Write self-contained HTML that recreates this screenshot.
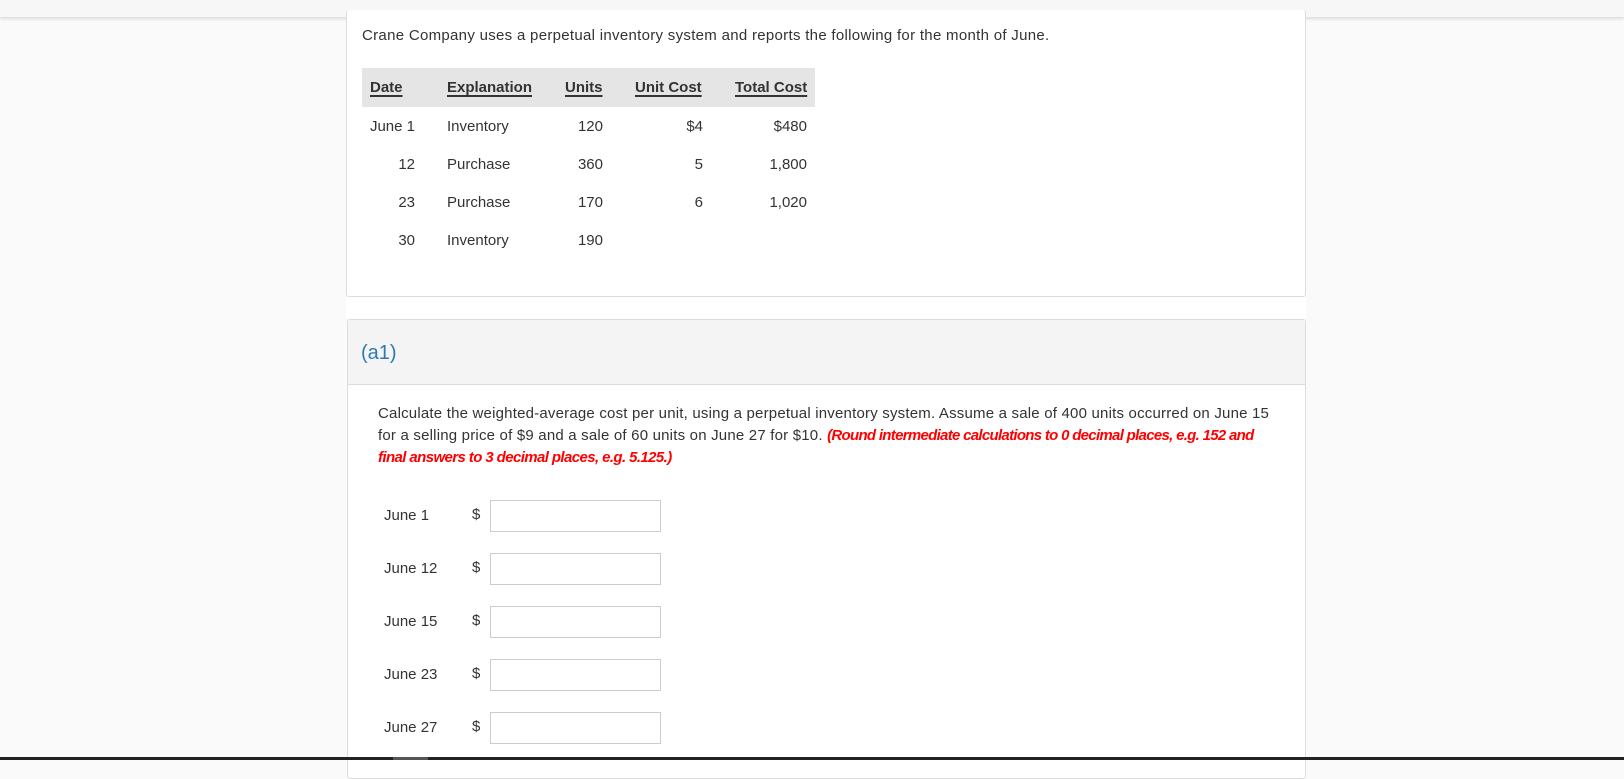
<!DOCTYPE html>
<html><head><meta charset="utf-8"><style>
*{margin:0;padding:0;box-sizing:border-box}
body{width:1624px;height:760px;overflow:hidden;background:#fafafa;font-family:"Liberation Sans",sans-serif;color:#333;position:relative}
.top{position:absolute;left:0;top:0;width:1624px;height:17px;background:#f7f7f7;box-shadow:0 2px 3px rgba(0,0,0,.12)}
.card{position:absolute;background:#fff;border:1px solid #ddd;border-radius:3px}
.t{position:absolute;white-space:nowrap;font-size:15px;line-height:20px}
.hd{position:absolute;left:362px;top:68px;width:453px;height:39px;background:#e5e5e5}
.u{text-decoration:underline;text-underline-offset:3px;text-decoration-thickness:2px}
.inp{position:absolute;left:490px;width:171px;height:32px;border:1px solid #ccc;background:#fff}
.red{color:#f00;font-weight:bold;font-style:italic}
</style></head><body>
<div class="top"></div>
<div class="card" style="left:346px;top:10px;width:960px;height:287px;border-top:none"></div>
<div style="position:absolute;left:346px;top:297px;width:960px;height:22px;background:#fff"></div>
<div class="card" style="left:347px;top:319px;width:959px;height:460px;">
<div style="position:absolute;left:0;top:0;right:0;height:65px;background:#f4f4f4;border-bottom:1px solid #ddd"></div>
</div>
<div class="t" style="left:362px;top:26px;letter-spacing:0.3px">Crane Company uses a perpetual inventory system and reports the following for the month of June.</div>
<div class="hd"></div>
<div class="t u" style="left:370px;top:78px;font-weight:bold;color:#333">Date</div>
<div class="t u" style="left:447px;top:78px;font-weight:bold">Explanation</div>
<div class="t u" style="left:565px;top:78px;font-weight:bold">Units</div>
<div class="t u" style="left:635px;top:78px;font-weight:bold">Unit Cost</div>
<div class="t u" style="left:735px;top:78px;font-weight:bold">Total Cost</div>

<div class="t" style="left:365px;top:117px;width:50px;text-align:right">June 1</div>
<div class="t" style="left:447px;top:117px">Inventory</div>
<div class="t" style="left:553px;top:117px;width:50px;text-align:right">120</div>
<div class="t" style="left:653px;top:117px;width:50px;text-align:right">$4</div>
<div class="t" style="left:737px;top:117px;width:70px;text-align:right">$480</div>

<div class="t" style="left:365px;top:155px;width:50px;text-align:right">12</div>
<div class="t" style="left:447px;top:155px">Purchase</div>
<div class="t" style="left:553px;top:155px;width:50px;text-align:right">360</div>
<div class="t" style="left:653px;top:155px;width:50px;text-align:right">5</div>
<div class="t" style="left:737px;top:155px;width:70px;text-align:right">1,800</div>

<div class="t" style="left:365px;top:193px;width:50px;text-align:right">23</div>
<div class="t" style="left:447px;top:193px">Purchase</div>
<div class="t" style="left:553px;top:193px;width:50px;text-align:right">170</div>
<div class="t" style="left:653px;top:193px;width:50px;text-align:right">6</div>
<div class="t" style="left:737px;top:193px;width:70px;text-align:right">1,020</div>

<div class="t" style="left:365px;top:231px;width:50px;text-align:right">30</div>
<div class="t" style="left:447px;top:231px">Inventory</div>
<div class="t" style="left:553px;top:231px;width:50px;text-align:right">190</div>

<div class="t" style="left:361px;top:340px;font-size:20px;line-height:26px;color:#2b7bb0">(a1)</div>

<div class="t" style="left:378px;top:403px;line-height:22px;letter-spacing:0.2px">Calculate the weighted-average cost per unit, using a perpetual inventory system. Assume a sale of 400 units occurred on June 15<br>for a selling price of $9 and a sale of 60 units on June 27 for $10. <span class="red" style="letter-spacing:-0.7px">(Round intermediate calculations to 0 decimal places, e.g. 152 and</span><br><span class="red" style="letter-spacing:-0.6px">final answers to 3 decimal places, e.g. 5.125.)</span></div>

<div class="t" style="left:384px;top:506px">June 1</div><div class="t" style="left:472px;top:505px">$</div><div class="inp" style="top:500px"></div>
<div class="t" style="left:384px;top:559px">June 12</div><div class="t" style="left:472px;top:558px">$</div><div class="inp" style="top:553px"></div>
<div class="t" style="left:384px;top:612px">June 15</div><div class="t" style="left:472px;top:611px">$</div><div class="inp" style="top:606px"></div>
<div class="t" style="left:384px;top:665px">June 23</div><div class="t" style="left:472px;top:664px">$</div><div class="inp" style="top:659px"></div>
<div class="t" style="left:384px;top:718px">June 27</div><div class="t" style="left:472px;top:717px">$</div><div class="inp" style="top:712px"></div>

<div style="position:absolute;left:0;top:757px;width:1624px;height:3px;background:#222"></div>
<div style="position:absolute;left:393px;top:757px;width:35px;height:3px;background:#555"></div>
</body></html>
